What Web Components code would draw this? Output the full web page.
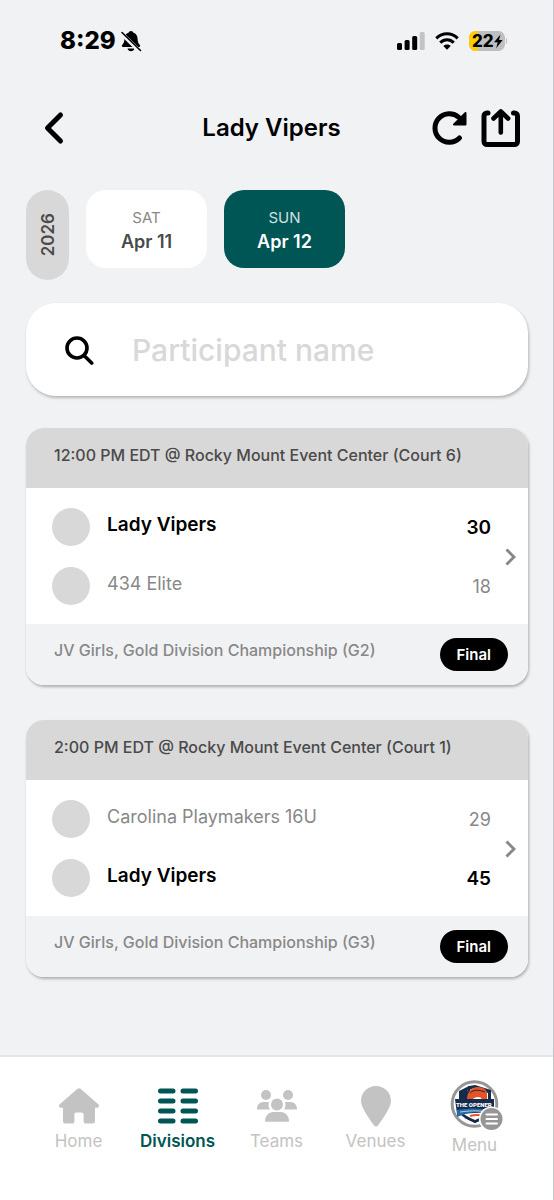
<!DOCTYPE html>
<html lang="en">
<head>
<meta charset="utf-8">
<meta name="viewport" content="width=device-width, initial-scale=1">
<title>Lady Vipers</title>
<style>
  html { background: #f1f2f4; }
  body { margin: 0; font-family: Inter, "Open Sans", sans-serif; color: #000; }
</style>
</head>
<body>
<team-schedule-app></team-schedule-app>

<script>
const define = (name, html, setup) => {
  const template = document.createElement('template');
  template.innerHTML = html;
  customElements.define(name, class extends HTMLElement {
    connectedCallback() {
      if (this.shadowRoot) return;
      this.attachShadow({ mode: 'open' }).append(template.content.cloneNode(true));
      if (setup) setup(this, this.shadowRoot);
    }
  });
};

define('status-bar', `
  <style>
    :host { display: flex; justify-content: space-between; align-items: center; height: 32px; padding: 25px 46px 0 60px; }
    div { display: flex; align-items: center; }
    .time { font-size: 24px; font-weight: 800; line-height: 32px; gap: 4px; }
    .state { gap: 10px; }
    svg { display: block; }
  </style>
  <div class="time"><span>8:29</span>
    <svg width="22" height="22" viewBox="0 0 22 22" aria-label="Silent">
      <path d="M11 1c1.500 0 2 .8 2.200 1.500 3 .9 4.300 3.400 4.400 6.500.1 3.500 1 4.500 2.300 6 .6.800.2 2-.9 2H3c-1.100 0-1.500-1.200-.9-2 1.300-1.500 2.200-2.500 2.300-6 .1-3.100 1.400-5.600 4.400-6.500C9 1.800 9.500 1 11 1zM7.500 18.500h7c-.5 1.700-1.800 2.700-3.500 2.700s-3-1-3.500-2.700z"/>
      <path d="M1.500 3.500l18 17.500" stroke="#f1f2f4" stroke-width="4"/>
      <path d="M2 2.500l18.500 18" stroke="#000" stroke-width="1.600" stroke-linecap="round"/>
    </svg>
  </div>
  <div class="state">
    <svg width="28" height="18" viewBox="0 0 28 18" aria-label="Signal"><rect y="11" width="5" height="7" rx="1.500"/><rect x="7.600" y="8" width="5" height="10" rx="1.500"/><rect x="15.200" y="4" width="5" height="14" rx="1.500"/><rect x="22.700" width="5" height="18" rx="1.500" fill="#c3c3c5"/></svg>
    <svg width="24" height="18" viewBox="0 0 24 18" aria-label="Wi-Fi" fill="none" stroke="#000" stroke-width="3"><path d="M1.300 6.400C7.500.3 16.500.3 22.700 6.400M5.200 10.600c4-3.900 9.600-3.900 13.600 0"/><path d="M12 17.700l-3.700-3.800c2.200-1.900 5.200-1.900 7.400 0z" fill="#000" stroke="none"/></svg>
    <svg width="38" height="20" viewBox="0 0 38 20" aria-label="Battery"><rect x="0" width="36" height="20" rx="6.500" fill="#bfbfc1"/><path d="M6.500 0H9v20H6.500A6.500 6.500 0 0 1 0 13.500v-7A6.500 6.500 0 0 1 6.500 0z" fill="#fc0"/><path d="M37 7c2.300.7 2.300 5.300 0 6z" fill="#bfbfc1"/><text x="3" y="16" font-size="17" font-weight="800">22</text><path d="M31.500 3.500L25 11.200h3.700l-1.500 6L33.600 9H30z"/></svg>
  </div>
`);

define('page-header', `
  <style>
    :host { display: grid; grid-template-columns: 1fr auto 1fr; align-items: center; height: 40px; padding: 51px 32px 0 22px; }
    h1 { margin: 0; font-size: 24px; font-weight: 600; line-height: 40px; }
    button { border: 0; background: none; padding: 0; color: inherit; display: block; }
    .back { padding-left: 20px; justify-self: start; }
    .actions { display: flex; justify-content: flex-end; gap: 12px; }
    svg { display: block; fill: none; stroke: #000; stroke-linecap: round; stroke-linejoin: round; }
  </style>
  <button class="back" type="button" aria-label="Back"><svg width="24" height="40" viewBox="0 0 24 40" stroke-width="5"><path d="M18.500 7L5.500 20l13 13"/></svg></button>
  <h1><slot></slot></h1>
  <div class="actions">
    <button type="button" aria-label="Refresh"><svg width="38" height="40" viewBox="0 0 38 40" stroke-width="5"><path d="M28.500 30A14.300 14.300 0 1 1 28 9.500"/><path d="M34.500 5v11.500H23z" fill="#000" stroke-width="2"/></svg></button>
    <button type="button" aria-label="Share"><svg width="40" height="40" viewBox="0 0 40 40" stroke-width="5"><path d="M7 5H6a3 3 0 0 0-3 3v25.500a3 3 0 0 0 3 3h27.500a3 3 0 0 0 3-3V8a3 3 0 0 0-3-3H32.500"/><path d="M19.800 24.500V4M12.500 10.500L19.800 3.500l7.300 7" stroke-width="4.600"/></svg></button>
  </div>
`);

define('year-pill', `
  <style>
    :host { display: flex; align-items: center; justify-content: center; width: 43px; height: 90px; border-radius: 22px; background: #d8d8d8; color: #4a4a4a; }
    span { writing-mode: vertical-rl; rotate: 180deg; font-size: 17px; font-weight: 600; line-height: 24px; }
  </style>
  <span><slot></slot></span>
`);

define('day-tab', `
  <style>
    :host { display: block; width: 121px; }
    button { display: block; width: 100%; height: 78px; padding: 2px 0 0; border: 0; border-radius: 20px; background: #fff; color: #4a4a4a; font: 600 18px/24px Inter, sans-serif; }
    .day { display: block; font-size: 15px; font-weight: 400; color: #888; }
    :host([selected]) button { background: #005555; color: #fff; }
    :host([selected]) .day { color: #cfe0e0; }
  </style>
  <button type="button"><span class="day"><slot name="day"></slot></span><slot></slot></button>
`, (el, root) => root.querySelector('button').setAttribute('aria-pressed', el.hasAttribute('selected')));

define('participant-search', `
  <style>
    :host { display: block; }
    label { display: flex; align-items: center; gap: 38px; height: 93px; padding: 0 39px; border-radius: 30px; background: #fff; box-shadow: 1px 2px 3px rgba(0,0,0,.25); }
    svg { flex: none; }
    input { flex: 1; min-width: 0; border: 0; outline: 0; padding: 0; background: none; font: 500 30px/40px Inter, sans-serif; }
    input::placeholder { color: #d8d8d8; opacity: 1; }
  </style>
  <label><svg width="29" height="30" viewBox="0 0 29 30" fill="none" stroke="#000" stroke-width="3.600" stroke-linecap="round" aria-hidden="true"><circle cx="12" cy="13" r="10"/><path d="M19.500 21l7.200 7"/></svg><input type="text" aria-label="Participant name" placeholder="Participant name"></label>
`);

define('team-row', `
  <style>
    :host { display: grid; grid-template-columns: 38px 1fr auto; column-gap: 17px; height: 38px; font-size: 18px; color: #888; }
    i { width: 38px; height: 38px; border-radius: 50%; background: #d8d8d8; }
    .name { line-height: 34px; }
    .score { line-height: 40px; }
    :host([winner]) { font-size: 19px; font-weight: 600; color: #000; }
  </style>
  <i></i><span class="name"><slot></slot></span><span class="score"><slot name="score"></slot></span>
`);

define('match-card', `
  <style>
    :host { display: block; border-radius: 18px; overflow: hidden; background: #fff; box-shadow: 1px 2px 3px rgba(0,0,0,.28); }
    header, footer { font-size: 16px; line-height: 24px; font-weight: 500; }
    header { padding: 15px 28px 21px; background: #d8d8d8; color: #4a4a4a; }
    .body { display: grid; grid-template-columns: 1fr auto; align-items: center; gap: 14px; padding: 20px 12px 19px 26px; }
    .teams { display: grid; gap: 21px; }
    svg { display: block; }
    footer { display: flex; justify-content: space-between; align-items: flex-start; padding: 14px 20px 14px 28px; background: #f1f2f4; color: #888; }
    .status { padding: 0 17px; border-radius: 17px; background: #000; color: #fff; font-size: 15px; font-weight: 600; line-height: 33px; }
  </style>
  <header><slot name="when"></slot></header>
  <div class="body"><div class="teams"><slot></slot></div><svg width="11" height="18" viewBox="0 0 11 18" fill="none" stroke="#888" stroke-width="3" aria-hidden="true"><path d="M1.500 1.500L9 9l-7.500 7.500"/></svg></div>
  <footer><slot name="division"></slot><span class="status"><slot name="status"></slot></span></footer>
`);

const navIcons = {
  home: '<svg width="40" height="36" viewBox="0 0 40 36" fill="currentColor"><path d="M18.500.8a2.300 2.300 0 0 1 3 0L39.300 16.200c1.400 1.300.5 3.600-1.300 3.600h-2V33a2.600 2.600 0 0 1-2.600 2.600h-6.200a2.600 2.600 0 0 1-2.600-2.600v-6.300c0-1.300-.9-2.200-2.200-2.200h-4.800c-1.300 0-2.200.9-2.200 2.200V33a2.600 2.600 0 0 1-2.600 2.600H6.600A2.600 2.600 0 0 1 4 33V19.800H2C.2 19.800-.7 17.500.7 16.200z"/></svg>',
  divisions: '<svg width="40" height="36" viewBox="0 0 40 36" stroke="currentColor" stroke-width="5" stroke-linecap="round"><path d="M2.500 3h12.500M25 3h12.500M2.500 13h12.500M25 13h12.500M2.500 23h12.500M25 23h12.500M2.500 33h12.500M25 33h12.500"/></svg>',
  teams: '<svg width="40" height="36" viewBox="0 0 40 36" fill="currentColor"><circle cx="9" cy="7" r="5"/><circle cx="31" cy="7" r="5"/><path d="M0 21c0-4 2.500-7 6.500-7H12c-1 2.500-.5 5 1 7.500H1.500Q0 21.500 0 21zM40 21c0-4-2.500-7-6.500-7H28c1 2.500.5 5-1 7.500h11.500q1.500 0 1.500-.5z"/><circle cx="20" cy="16.500" r="7.300" fill="#fff"/><circle cx="20" cy="16.500" r="6"/><path d="M8 33c0-5 3.500-9 8.500-9h7c5 0 8.500 4 8.500 9q0 .8-1 .8H9q-1 0-1-.8z"/></svg>',
  venues: '<svg width="30" height="41" viewBox="0 0 30 41" fill="currentColor"><path d="M15 0c8.300 0 15 6.600 15 15 0 6.600-8.700 18.500-13 24.500-1 1.400-3 1.400-4 0C8.700 33.500 0 21.600 0 15 0 6.600 6.700 0 15 0z"/></svg>',
  menu: `<svg width="54" height="52" viewBox="0 4 54 52"><circle cx="26.500" cy="26" r="22.300" fill="#fff" stroke="#969696" stroke-width="3"/>
    <path d="M11 13l10-5 6-1 16 5v20c0 6-8 9-16 13C19 41 11 38 11 32z" fill="#152b4b"/><path d="M14 15l12-5 14 5v17c0 5-7 7-13 10-6-3-13-5-13-10z" fill="#fff"/>
    <path d="M13 23v-9h3v-3h2v2h2V8h2v15z" fill="#152b4b"/><path d="M19 22c0-9 5-13 11-13 6 0 9 3 9 7v6h-5c0-4-7-4-10 0z" fill="#e65327"/><path d="M22 15c4-4 10-3 15-1" fill="none" stroke="#1c2b49"/>
    <path d="M7 21h39v9l-2 4-35 2z" fill="#152b4b"/><text x="8" y="29" font-family="Roboto, sans-serif" font-size="6" font-weight="900" fill="#fff">THE OPENER</text>
    <path d="M9 32c12-2 23-2 34 0l-3 4c-10-3-19-2-31 3z" fill="#286aa8"/><path d="M12 34c8-1 17-2 25 0" fill="none" stroke="#b6cce2"/><path d="M22 38c6-2 11-1 15 0" fill="none" stroke="#e65327" stroke-width="2"/><path d="M17 39l10 5 8-4" fill="none" stroke="#152b4b" stroke-width="2"/>
    <circle cx="43.500" cy="41" r="11.800" fill="#969696" stroke="#fff" stroke-width="1.600"/><path d="M38.500 36.500h10.500M38.500 41h10.500M38.500 45.500h10.500" stroke="#fff" stroke-width="2" stroke-linecap="round"/></svg>`
};

define('nav-item', `
  <style>
    :host { flex: 1; display: block; min-width: 0; }
    a { display: flex; flex-direction: column; align-items: center; color: #c3c3c3; text-decoration: none; font-size: 17px; line-height: 24px; white-space: nowrap; }
    .icon { display: flex; align-items: center; justify-content: center; height: 42px; margin-bottom: 2px; }
    :host([selected]) a { color: #005555; font-weight: 600; }
    :host([icon=menu]) .icon { height: 46px; }
    svg { display: block; overflow: visible; }
  </style>
  <a href="#"><span class="icon" aria-hidden="true"></span><slot></slot></a>
`, (el, root) => {
  root.querySelector('.icon').innerHTML = navIcons[el.getAttribute('icon')];
  if (el.hasAttribute('selected')) root.querySelector('a').setAttribute('aria-current', 'page');
});

define('bottom-nav', `
  <style>
    :host { display: block; border-top: 2px solid #e4e5e7; background: #fff; }
    nav { display: flex; padding: 28px 29px 43px; }
  </style>
  <nav aria-label="Main"><slot></slot></nav>
`);

define('team-schedule-app', `
  <style>
    :host { display: flex; flex-direction: column; min-height: 100vh; box-sizing: border-box; border-right: 1px solid #c4c5c8; background: #f1f2f4; }
    main { padding: 42px 25px 40px 26px; }
    .days { display: flex; gap: 17px; align-items: flex-start; margin-bottom: 23px; }
    .matches { display: grid; gap: 35px; margin-top: 32px; }
    bottom-nav { margin-top: auto; }
  </style>
  <status-bar></status-bar>
  <page-header>Lady Vipers</page-header>
  <main>
    <div class="days">
      <year-pill>2026</year-pill>
      <day-tab><span slot="day">SAT</span>Apr 11</day-tab>
      <day-tab selected><span slot="day">SUN</span>Apr 12</day-tab>
    </div>
    <participant-search></participant-search>
    <div class="matches">
      <match-card>
        <span slot="when">12:00 PM EDT @ Rocky Mount Event Center (Court 6)</span>
        <team-row winner>Lady Vipers<span slot="score">30</span></team-row>
        <team-row>434 Elite<span slot="score">18</span></team-row>
        <span slot="division">JV Girls, Gold Division Championship (G2)</span><span slot="status">Final</span>
      </match-card>
      <match-card>
        <span slot="when">2:00 PM EDT @ Rocky Mount Event Center (Court 1)</span>
        <team-row>Carolina Playmakers 16U<span slot="score">29</span></team-row>
        <team-row winner>Lady Vipers<span slot="score">45</span></team-row>
        <span slot="division">JV Girls, Gold Division Championship (G3)</span><span slot="status">Final</span>
      </match-card>
    </div>
  </main>
  <bottom-nav>
    <nav-item icon="home">Home</nav-item>
    <nav-item icon="divisions" selected>Divisions</nav-item>
    <nav-item icon="teams">Teams</nav-item>
    <nav-item icon="venues">Venues</nav-item>
    <nav-item icon="menu">Menu</nav-item>
  </bottom-nav>
`);
</script>
</body>
</html>
